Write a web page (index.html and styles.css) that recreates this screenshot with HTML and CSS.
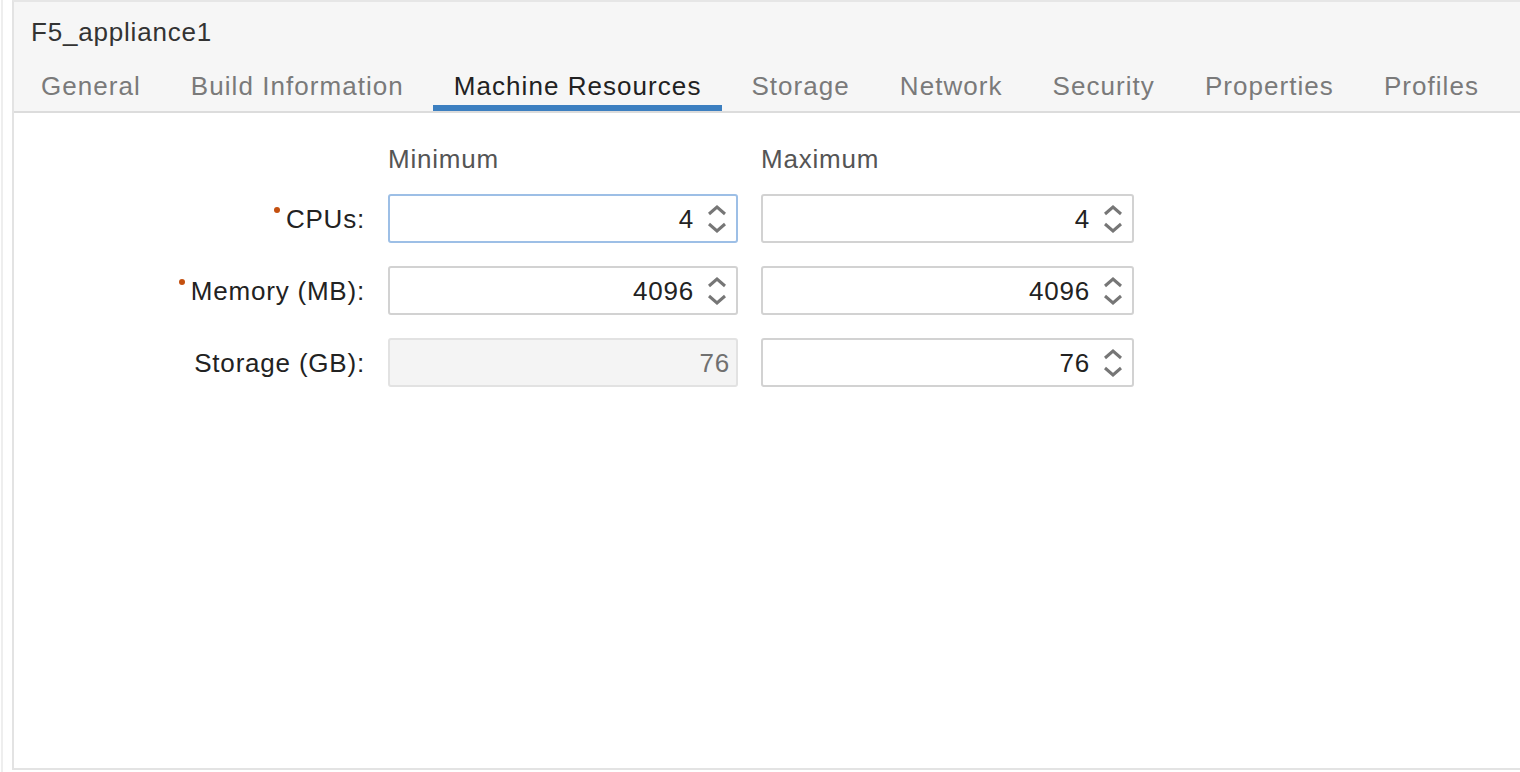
FILE: index.html
```html
<!DOCTYPE html>
<html lang="en">
<head>
<meta charset="utf-8">
<title>F5_appliance1</title>
<link rel="stylesheet" href="styles.css">
</head>
<body>
<div class="frame">
  <div class="rail"></div>
  <section class="panel">
    <header class="head">
      <div class="title">F5_appliance1</div>
      <nav class="tabs">
        <span class="tab">General</span>
        <span class="tab">Build Information</span>
        <span class="tab active">Machine Resources</span>
        <span class="tab">Storage</span>
        <span class="tab">Network</span>
        <span class="tab">Security</span>
        <span class="tab">Properties</span>
        <span class="tab">Profiles</span>
      </nav>
    </header>
    <div class="content">
      <div class="form">
        <div class="blank"></div>
        <div class="colhead">Minimum</div>
        <div class="colhead">Maximum</div>

        <div class="lbl"><span class="req"></span>CPUs:</div>
        <div class="field focus"><span class="val">4</span><svg class="spin" viewBox="0 0 20 28" width="20" height="28"><path d="M2 9 L10 2 L18 9 M2 19 L10 26 L18 19"/></svg></div>
        <div class="field"><span class="val">4</span><svg class="spin" viewBox="0 0 20 28" width="20" height="28"><path d="M2 9 L10 2 L18 9 M2 19 L10 26 L18 19"/></svg></div>

        <div class="lbl"><span class="req"></span>Memory (MB):</div>
        <div class="field"><span class="val">4096</span><svg class="spin" viewBox="0 0 20 28" width="20" height="28"><path d="M2 9 L10 2 L18 9 M2 19 L10 26 L18 19"/></svg></div>
        <div class="field"><span class="val">4096</span><svg class="spin" viewBox="0 0 20 28" width="20" height="28"><path d="M2 9 L10 2 L18 9 M2 19 L10 26 L18 19"/></svg></div>

        <div class="lbl">Storage (GB):</div>
        <div class="field disabled"><span class="val">76</span></div>
        <div class="field"><span class="val">76</span><svg class="spin" viewBox="0 0 20 28" width="20" height="28"><path d="M2 9 L10 2 L18 9 M2 19 L10 26 L18 19"/></svg></div>
      </div>
    </div>
  </section>
</div>
</body>
</html>
```
FILE: styles.css
```css
html, body {
  margin: 0;
  padding: 0;
  background: #ffffff;
  overflow: hidden;
}
body {
  font-family: "Liberation Sans", Arial, sans-serif;
  font-size: 26px;
  letter-spacing: 0.8px;
  color: #222;
}
.frame {
  display: flex;
  height: 772px;
  width: 1540px;
}
.rail {
  width: 2px;
  margin-left: 1px;
  background: #eeeeee;
  flex: none;
}
.panel {
  margin-left: 9px;
  flex: 1;
  height: 766px;
  border-left: 2px solid #e3e3e3;
  border-top: 2px solid #e6e6e6;
  border-bottom: 2px solid #e3e3e3;
  display: flex;
  flex-direction: column;
}
.head {
  background: #f6f6f6;
  border-bottom: 2px solid #dcdcdc;
  padding-top: 15px;
  flex: none;
}
.title {
  line-height: 30px;
  padding-left: 17px;
  color: #333;
}
.tabs {
  display: flex;
  gap: 8px;
  margin-top: 24px;
  margin-left: 6px;
}
.tab {
  line-height: 30px;
  padding: 0 21px 4px;
  border-bottom: 6px solid transparent;
  color: #7a7a7a;
  white-space: nowrap;
  letter-spacing: 1.05px;
}
.tab.active {
  color: #222;
  border-bottom-color: #3c7fc0;
}
.content {
  flex: 1;
  padding-top: 31px;
}
.form {
  display: grid;
  grid-template-columns: 351px 350px 373px;
  column-gap: 23px;
  row-gap: 23px;
  align-items: center;
}
.colhead {
  line-height: 30px;
  color: #555;
  margin-bottom: -3px;
}
.lbl {
  text-align: right;
  color: #222;
  line-height: 30px;
  white-space: nowrap;
}
.req {
  display: inline-block;
  width: 6px;
  height: 6px;
  border-radius: 50%;
  background: #c4500f;
  vertical-align: top;
  margin-top: 3px;
  margin-right: 6px;
}
.field {
  box-sizing: border-box;
  height: 49px;
  border: 2px solid #d2d2d2;
  border-radius: 3px;
  background: #fff;
  display: flex;
  align-items: center;
  justify-content: flex-end;
  padding-right: 9px;
  gap: 13px;
}
.field.focus {
  border-color: #9dbfe6;
}
.field.disabled {
  background: #f4f4f4;
  border-color: #e2e2e2;
  padding-right: 6px;
}
.field.disabled .val {
  color: #707070;
}
.val {
  line-height: 30px;
  color: #222;
}
.spin {
  display: block;
  flex: none;
}
.spin path {
  fill: none;
  stroke: #767676;
  stroke-width: 3;
}
```
